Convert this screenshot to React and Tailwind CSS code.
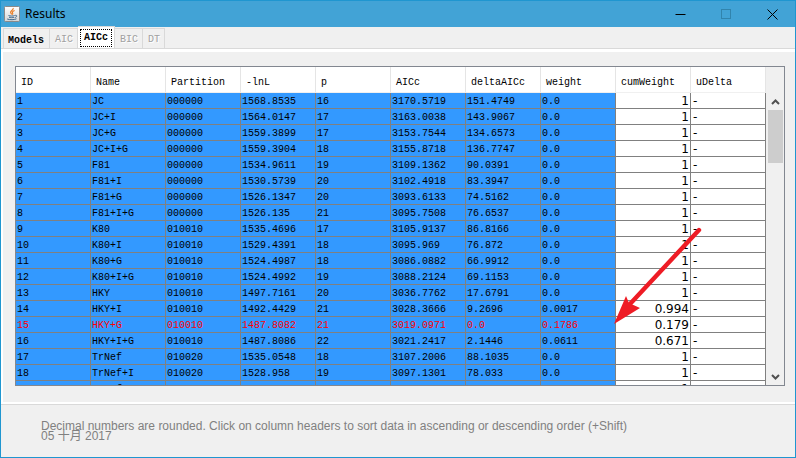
import React from "react";

const columns = ["ID", "Name", "Partition", "-lnL", "p", "AICc", "deltaAICc", "weight", "cumWeight", "uDelta"];

const rows = [
  ["1", "JC", "000000", "1568.8535", "16", "3170.5719", "151.4749", "0.0", "1", "-"],
  ["2", "JC+I", "000000", "1564.0147", "17", "3163.0038", "143.9067", "0.0", "1", "-"],
  ["3", "JC+G", "000000", "1559.3899", "17", "3153.7544", "134.6573", "0.0", "1", "-"],
  ["4", "JC+I+G", "000000", "1559.3904", "18", "3155.8718", "136.7747", "0.0", "1", "-"],
  ["5", "F81", "000000", "1534.9611", "19", "3109.1362", "90.0391", "0.0", "1", "-"],
  ["6", "F81+I", "000000", "1530.5739", "20", "3102.4918", "83.3947", "0.0", "1", "-"],
  ["7", "F81+G", "000000", "1526.1347", "20", "3093.6133", "74.5162", "0.0", "1", "-"],
  ["8", "F81+I+G", "000000", "1526.135", "21", "3095.7508", "76.6537", "0.0", "1", "-"],
  ["9", "K80", "010010", "1535.4696", "17", "3105.9137", "86.8166", "0.0", "1", "-"],
  ["10", "K80+I", "010010", "1529.4391", "18", "3095.969", "76.872", "0.0", "1", "-"],
  ["11", "K80+G", "010010", "1524.4987", "18", "3086.0882", "66.9912", "0.0", "1", "-"],
  ["12", "K80+I+G", "010010", "1524.4992", "19", "3088.2124", "69.1153", "0.0", "1", "-"],
  ["13", "HKY", "010010", "1497.7161", "20", "3036.7762", "17.6791", "0.0", "1", "-"],
  ["14", "HKY+I", "010010", "1492.4429", "21", "3028.3666", "9.2696", "0.0017", "0.994", "-"],
  ["15", "HKY+G", "010010", "1487.8082", "21", "3019.0971", "0.0", "0.1786", "0.179", "-"],
  ["16", "HKY+I+G", "010010", "1487.8086", "22", "3021.2417", "2.1446", "0.0611", "0.671", "-"],
  ["17", "TrNef", "010020", "1535.0548", "18", "3107.2006", "88.1035", "0.0", "1", "-"],
  ["18", "TrNef+I", "010020", "1528.958", "19", "3097.1301", "78.033", "0.0", "1", "-"],
  ["19", "TrNef+G", "010020", "1523.8846", "19", "3086.9833", "67.8862", "0.0", "1", "-"],
];

const BEST_MODEL = "15";

const tabs = [
  { name: "Models", state: "enabled" },
  { name: "AIC", state: "disabled" },
  { name: "AICc", state: "selected" },
  { name: "BIC", state: "disabled" },
  { name: "DT", state: "disabled" },
];

const tabStyles = {
  enabled: "h-5 pt-1 pr-[5px] pl-1 border-l text-black font-bold",
  disabled: "h-5 pt-[3px] pr-1 pl-[5px] text-[#a0a0a0] [text-shadow:1px_1px_0_#fff]",
  selected: "h-[22px] px-[2px] bg-white text-black font-bold",
};

function JavaIcon() {
  return (
    <svg viewBox="0 0 16 16" className="size-4" aria-hidden="true">
      <defs>
        <linearGradient id="tile" x1="0" y1="0" x2="0" y2="1">
          <stop offset="0" stopColor="#ffffff" />
          <stop offset="1" stopColor="#d5d5d5" />
        </linearGradient>
      </defs>
      <rect x="0.5" y="0.5" width="15" height="15" rx="1" fill="url(#tile)" stroke="#8a8a8a" />
      <path d="M9.2 2c.6 2-3 2.8-2.6 4.5.2.8 1 1.2 1 2M10.6 4.6C8.4 5.5 8 6.2 8.6 7c.4.6.2 1-.2 1.6" fill="none" stroke="#e8791e" strokeWidth="1.1" />
      <path d="M4.5 9.5c1.5.7 4.6.7 6.2 0M5 11.2c1.5.6 3.6.6 5 0M3.2 13c2.5 1 7.3.9 9.3-.2M11.2 9.3c2.3-.4 2 1.8-.5 2.3" fill="none" stroke="#40688c" strokeWidth="1" />
    </svg>
  );
}

function TitleBar() {
  return (
    <header className="flex h-[26px] shrink-0 items-center bg-[#42a3d6] pr-[17px] pl-[3px]">
      <JavaIcon />
      <h1 className="ml-[5px] flex-1 font-['Noto_Sans',sans-serif] text-xs leading-4 text-black">Results</h1>
      <div className="flex items-center gap-[35px]">
        <button aria-label="Minimize" className="size-[11px]">
          <svg viewBox="0 0 11 11" className="block size-[11px]"><path d="M0.5 5.5h10" stroke="#000" /></svg>
        </button>
        <button aria-label="Maximize" disabled className="size-[11px]">
          <svg viewBox="0 0 11 11" className="block size-[11px]"><rect x="0.5" y="0.5" width="9" height="9" fill="none" stroke="#3184ad" /></svg>
        </button>
        <button aria-label="Close" className="size-[11px]">
          <svg viewBox="0 0 11 11" className="block size-[11px]"><path d="M0.5 0.5l10 10M10.5 0.5l-10 10" stroke="#000" /></svg>
        </button>
      </div>
    </header>
  );
}

function Tabs() {
  return (
    <div role="tablist" className="flex h-[22px] shrink-0 items-end border-b border-[#d9d9d9] pl-[2px] font-['Liberation_Mono',monospace] text-[10px]">
      {tabs.map(({ name, state }) => (
        <button
          key={name}
          role="tab"
          aria-selected={state === "selected"}
          disabled={state === "disabled"}
          className={`flex items-center border-t border-r border-[#d9d9d9] ${tabStyles[state]}`}
        >
          {state === "selected" ? (
            <span className="border border-dotted border-black px-[3px] leading-4">{name}</span>
          ) : (
            <span className="leading-4">{name}</span>
          )}
        </button>
      ))}
    </div>
  );
}

function ModelTable() {
  return (
    <table className="w-[750px] shrink-0 table-fixed border-separate border-spacing-0 self-start font-['Liberation_Mono',monospace] text-[10px] leading-[13px]">
      <thead>
        <tr>
          {columns.map((name) => (
            <th key={name} scope="col" className="h-[26px] border-r border-b border-r-[#e5e5e5] border-b-[#f0f0f0] bg-white p-0 pt-[5px] pl-[5px] text-left font-normal">
              {name}
            </th>
          ))}
        </tr>
      </thead>
      <tbody>
        {rows.map((row) => (
          <tr key={row[0]} className={row[0] === BEST_MODEL ? "text-[#ff0000]" : "text-black"}>
            {row.map((value, i) => (
              <td
                key={columns[i]}
                className={`h-4 border-r border-b border-[#808080] p-0 ${
                  i < 8 ? "bg-[#3399ff] pt-[2px] pl-px" : "bg-white pt-px pr-px pl-[2px] font-['DejaVu_Sans',sans-serif] text-xs leading-[14px] text-black"
                } ${i === 8 ? "text-right" : ""}`}
              >
                {value}
              </td>
            ))}
          </tr>
        ))}
      </tbody>
    </table>
  );
}

function ScrollBar() {
  return (
    <div className="flex min-w-0 flex-1 flex-col items-center bg-[#f0f0f0] pt-[26px] pl-px">
      <button aria-label="Scroll up" className="flex h-[17px] w-full items-center justify-center">
        <svg viewBox="0 0 9 6" className="w-[9px]"><path d="M1 5l3.5-3.5L8 5" fill="none" stroke="#505050" strokeWidth="2" /></svg>
      </button>
      <div className="h-[53px] w-[15px] bg-[#cdcdcd]" />
      <div className="flex-1" />
      <button aria-label="Scroll down" className="flex h-[17px] w-full items-center justify-center">
        <svg viewBox="0 0 9 6" className="w-[9px]"><path d="M1 1l3.5 3.5L8 1" fill="none" stroke="#505050" strokeWidth="2" /></svg>
      </button>
    </div>
  );
}

function Arrow() {
  return (
    <svg viewBox="0 0 90 98" className="pointer-events-none absolute top-[160px] right-[82px] h-[98px] w-[90px]" aria-hidden="true">
      <path d="M87 3L18 77" stroke="#ee1c25" strokeWidth="4.4" strokeLinecap="round" />
      <path d="M2 97L14 69L17 76L28 81Z" fill="#ee1c25" />
    </svg>
  );
}

export default function App() {
  return (
    <div className="flex h-screen flex-col overflow-hidden border border-[#1f96d0] bg-[#f0f0f0]">
      <TitleBar />
      <main className="flex min-h-0 flex-1 flex-col">
        <Tabs />
        <section role="tabpanel" aria-label="AICc" className="flex min-h-0 flex-1 flex-col border-t-[3px] border-b-2 border-l-2 border-white pt-[14px] pr-[10px] pb-4 pl-3">
          <div className="relative flex min-h-0 flex-1 overflow-hidden border border-[#828790]">
            <ModelTable />
            <ScrollBar />
            <Arrow />
          </div>
        </section>
      </main>
      <footer className="h-[53px] shrink-0 border-t border-[#d9d9d9] pt-4 pl-10 font-['Liberation_Sans','Noto_Sans_CJK_SC',sans-serif] text-xs leading-[10px] text-[#808080]">
        <p>Decimal numbers are rounded. Click on column headers to sort data in ascending or descending order (+Shift)</p>
        <p>05 十月 2017</p>
      </footer>
    </div>
  );
}
